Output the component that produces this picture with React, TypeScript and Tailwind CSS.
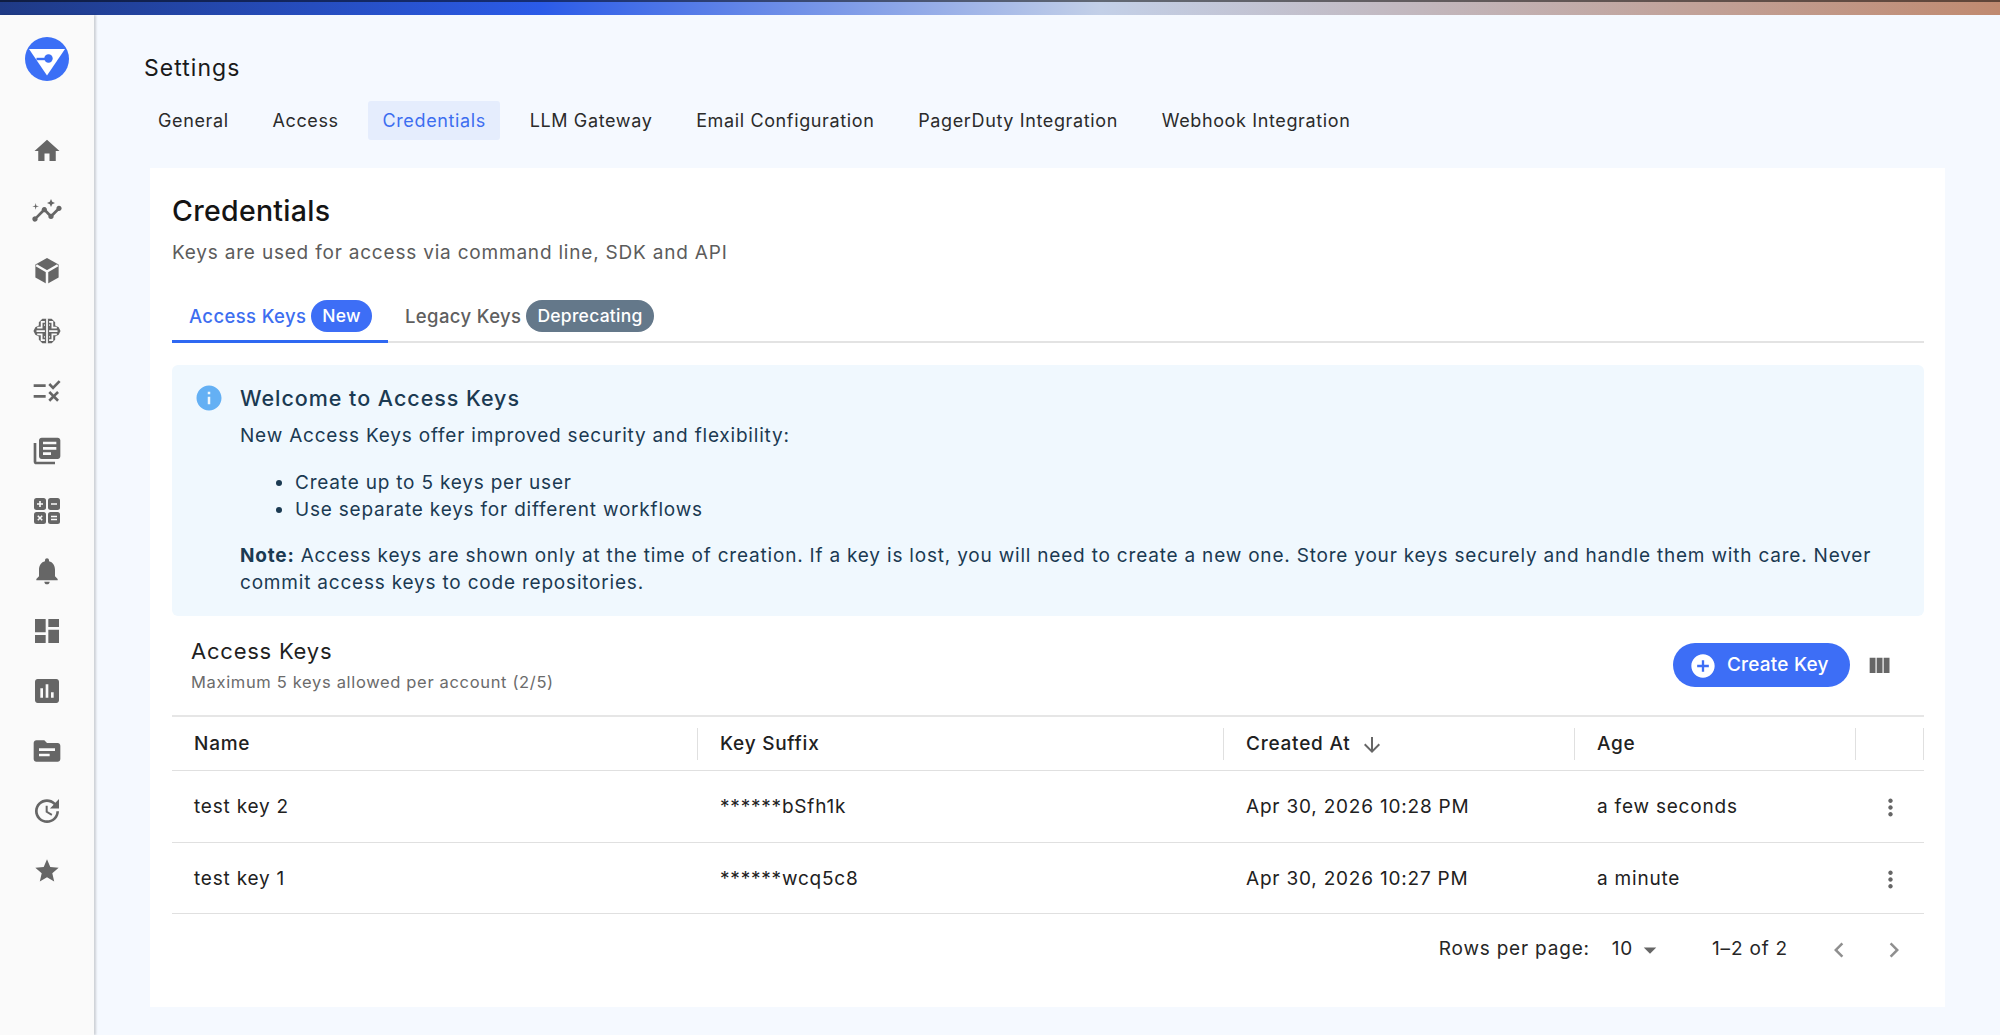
const Icon = ({ d, className = 'w-[32px] h-[32px]' }: { d: string; className?: string }) => (
  <svg viewBox="0 0 24 24" fill="currentColor" className={className}>
    <path d={d} />
  </svg>
)

const icons = {
  home: 'M10 20v-6h4v6h5v-8h3L12 3 2 12h3v8z',
  insights:
    'M21 8c-1.45 0-2.26 1.44-1.93 2.51l-3.55 3.56c-.3-.09-.74-.09-1.04 0l-2.55-2.55C12.27 10.45 11.46 9 10 9c-1.45 0-2.27 1.44-1.93 2.52l-4.56 4.55C2.44 15.74 1 16.55 1 18c0 1.1.9 2 2 2 1.45 0 2.26-1.44 1.93-2.51l4.55-4.56c.3.09.74.09 1.04 0l2.55 2.55C12.73 16.55 13.54 18 15 18c1.45 0 2.27-1.44 1.93-2.52l3.56-3.55c1.07.33 2.51-.48 2.51-1.93 0-1.1-.9-2-2-2zM15 9l.94-2.07L18 6l-2.06-.93L15 3l-.92 2.07L12 6l2.08.93zM3.5 11 4 9l2-.5L4 8l-.5-2L3 8l-2 .5L3 9z',
  rule: 'M16.54 11 13 7.46l1.41-1.41 2.12 2.12 4.24-4.24 1.41 1.41L16.54 11zM11 7H2v2h9V7zm10 6.41L19.59 12 17 14.59 14.41 12 13 13.41 15.59 16 13 18.59 14.41 20 17 17.41 19.59 20 21 18.59 18.41 16 21 13.41zM11 15H2v2h9v-2z',
  books:
    'M4 6H2v14c0 1.1.9 2 2 2h14v-2H4V6zm16-4H8c-1.1 0-2 .9-2 2v12c0 1.1.9 2 2 2h12c1.1 0 2-.9 2-2V4c0-1.1-.9-2-2-2zm-1 9H9V9h10v2zm-4 4H9v-2h6v2zm4-8H9V5h10v2z',
  bell: 'M12 22c1.1 0 2-.9 2-2h-4c0 1.1.89 2 2 2zm6-6v-5c0-3.07-1.64-5.64-4.5-6.32V4c0-.83-.67-1.5-1.5-1.5s-1.5.67-1.5 1.5v.68C7.63 5.36 6 7.92 6 11v5l-2 2v1h16v-1l-2-2z',
  dashboard: 'M3 13h8V3H3v10zm0 8h8v-6H3v6zm10 0h8V11h-8v10zm0-18v6h8V3h-8z',
  assessment:
    'M19 3H5c-1.1 0-2 .9-2 2v14c0 1.1.9 2 2 2h14c1.1 0 2-.9 2-2V5c0-1.1-.9-2-2-2zM9 17H7v-7h2v7zm4 0h-2V7h2v10zm4 0h-2v-4h2v4z',
  topic:
    'M20 6h-8l-2-2H4c-1.1 0-1.99.9-1.99 2L2 18c0 1.1.9 2 2 2h16c1.1 0 2-.9 2-2V8c0-1.1-.9-2-2-2zm-6 10H6v-2h8v2zm4-4H6v-2h12v2z',
  update:
    'M21 10.12h-6.78l2.74-2.82c-2.73-2.7-7.15-2.8-9.88-.1-2.73 2.71-2.73 7.08 0 9.79s7.15 2.71 9.88 0C18.32 15.65 19 14.08 19 12.1h2c0 1.98-.88 4.55-2.64 6.29-3.51 3.48-9.21 3.48-12.72 0-3.5-3.47-3.53-9.11-.02-12.58s9.14-3.47 12.65 0L21 3v7.12zM12.5 8v4.25l3.5 2.08-.72 1.21L11 13V8h1.5z',
  star: 'M12 17.27 18.18 21l-1.64-7.03L22 9.24l-7.19-.61L12 2 9.19 8.63 2 9.24l5.46 4.73L5.82 21z',
  columns: 'M10 18h5V5h-5v13zm-6 0h5V5H4v13zM16 5v13h5V5h-5z',
  more: 'M12 8c1.1 0 2-.9 2-2s-.9-2-2-2-2 .9-2 2 .9 2 2 2zm0 2c-1.1 0-2 .9-2 2s.9 2 2 2 2-.9 2-2-.9-2-2-2zm0 6c-1.1 0-2 .9-2 2s.9 2 2 2 2-.9 2-2-.9-2-2-2z',
  add: 'M12 2C6.48 2 2 6.48 2 12s4.48 10 10 10 10-4.48 10-10S17.52 2 12 2zm5 11h-4v4h-2v-4H7v-2h4V7h2v4h4v2z',
  info: 'M12 2C6.48 2 2 6.48 2 12s4.48 10 10 10 10-4.48 10-10S17.52 2 12 2zm1 15h-2v-6h2v6zm0-8h-2V7h2v2z',
  left: 'M15.41 7.41 14 6l-6 6 6 6 1.41-1.41L10.83 12z',
  right: 'M10 6 8.59 7.41 13.17 12l-4.58 4.59L10 18l6-6z',
  down: 'M20 12l-1.41-1.41L13 16.17V4h-2v12.17l-5.58-5.59L4 12l8 8 8-8z',
  drop: 'M7 10l5 5 5-5z',
}

const Logo = () => (
  <svg viewBox="0 0 44 44" className="w-[44px] h-[44px]">
    <circle cx="22" cy="22" r="22" fill="#3b6ff6" />
    <polygon points="4,12 40,12 22,38.5" fill="#fff" />
    <path d="M11.5 22h11" stroke="#3b6ff6" strokeWidth="2.4" />
    <circle cx="23.5" cy="21.5" r="4.2" fill="#3b6ff6" />
  </svg>
)

const Cube = () => (
  <svg viewBox="0 0 24 24" className="w-[30px] h-[30px]">
    <polygon points="12,1.6 21.3,6.8 21.3,17.2 12,22.4 2.7,17.2 2.7,6.8" fill="currentColor" />
    <path d="M12 12.4v10M12 12.4 3.4 7.4M12 12.4l8.6-5" stroke="#fafafa" strokeWidth="2" fill="none" />
  </svg>
)

// filled outline with the folds cut out in the sidebar colour
const Brain = () => (
  <svg viewBox="0 0 24 24" className="w-[28px] h-[28px]">
    <polygon
      points="8,1.5 16,1.5 19,4.5 19,7.2 22,8.8 23.6,12 22,15.2 19,16.8 19,19.5 16,22.5 8,22.5 5,19.5 5,16.8 2,15.2 0.4,12 2,8.8 5,7.2 5,4.5"
      fill="currentColor"
    />
    <path
      d="M12 1V23M10.2 4.2H7.4V9.2H3.6M10.2 7H9.6M10.2 12H3M10.2 19.8H7.4V14.8H3.6M10.2 17H9.6M13.8 4.2H16.6V9.2H20.4M13.8 7H14.4M13.8 12H21M13.8 19.8H16.6V14.8H20.4M13.8 17H14.4"
      stroke="#fafafa"
      strokeWidth="1.5"
      fill="none"
    />
  </svg>
)

const Calc = () => (
  <svg viewBox="0 0 26 26" className="w-[26px] h-[26px]" fill="currentColor">
    <rect x="0" y="0" width="12" height="12" rx="2.5" />
    <rect x="14" y="0" width="12" height="12" rx="2.5" />
    <rect x="0" y="14" width="12" height="12" rx="2.5" />
    <rect x="14" y="14" width="12" height="12" rx="2.5" />
    <path
      d="M3 6h6M6 3v6M17 6h6M3.8 17.8l4.4 4.4M8.2 17.8l-4.4 4.4M17 18.5h6M17 21.5h6"
      stroke="#fafafa"
      strokeWidth="1.6"
      fill="none"
    />
  </svg>
)

const Badge = ({ label, className }: { label: string; className: string }) => (
  <span className={`h-[32px] flex items-center rounded-full px-[11px] text-white text-[17.5px] font-medium tracking-[0.015em] ${className}`}>
    {label}
  </span>
)

const navIcons = [
  <Icon key="home" d={icons.home} className="w-[30px] h-[30px]" />,
  <Icon key="insights" d={icons.insights} />,
  <Cube key="cube" />,
  <Brain key="brain" />,
  <Icon key="rule" d={icons.rule} />,
  <Icon key="books" d={icons.books} />,
  <Calc key="calc" />,
  <Icon key="bell" d={icons.bell} />,
  <Icon key="dashboard" d={icons.dashboard} />,
  <Icon key="assessment" d={icons.assessment} />,
  <Icon key="topic" d={icons.topic} />,
  <Icon key="update" d={icons.update} />,
  <Icon key="star" d={icons.star} className="w-[28px] h-[28px]" />,
]

const navTabs = ['General', 'Access', 'Credentials', 'LLM Gateway', 'Email Configuration', 'PagerDuty Integration', 'Webhook Integration']

const rows = [
  { name: 'test key 2', suffix: '******bSfh1k', created: 'Apr 30, 2026 10:28 PM', age: 'a few seconds', height: 'h-[72px]' },
  { name: 'test key 1', suffix: '******wcq5c8', created: 'Apr 30, 2026 10:27 PM', age: 'a minute', height: 'h-[71px]' },
]

const gridCols = 'grid grid-cols-[526px_526px_351px_281px_68px]'

export default function App() {
  return (
    <div className="w-[2000px] h-[1035px] overflow-hidden flex flex-col bg-[#f5f9ff] font-['Inter',sans-serif] text-[#212121]">
      <div className="h-[15px] shrink-0 border-t-2 border-black/50 bg-[linear-gradient(90deg,#1f3a85_0%,#2b5be8_27%,#c3d0e8_55%,#c08a70_100%)]" />
      <div className="flex flex-1 min-h-0">
        <aside className="w-[94px] shrink-0 bg-[#fafafa] shadow-[2px_0_2px_rgba(0,0,0,0.16)] flex flex-col items-center pt-[22px] text-[#666666]">
          <Logo />
          <nav className="mt-[40px] flex flex-col items-center">
            {navIcons.map((icon) => (
              <span key={icon.key} className="h-[60px] flex items-center justify-center">
                {icon}
              </span>
            ))}
          </nav>
        </aside>

        <main className="flex-1 min-w-0 pl-[50px] pr-[55px]">
          <h1 className="mt-[38px] text-[23px] leading-[30px] tracking-[0.045em] font-normal text-[#1a1a1a]">Settings</h1>
          <div className="mt-[18px] flex gap-[15.75px] text-[18px] tracking-[0.035em] text-[#2b2b2b]">
            {navTabs.map((tab) => (
              <span
                key={tab}
                className={`h-[39px] px-[14px] flex items-center rounded-[3px] ${tab === 'Credentials' ? 'bg-[#e5edfd] text-[#3d6ef0]' : ''}`}
              >
                {tab}
              </span>
            ))}
          </div>

          <section className="mt-[28px] ml-[6px] h-[839px] bg-white pl-[22px] pr-[21px] pt-[25px]">
            <h2 className="text-[28.5px] leading-[36px] font-medium tracking-[0.01em] text-[#141414]">Credentials</h2>
            <p className="mt-[11px] text-[19px] leading-[26px] tracking-[0.042em] text-[#5c5c5c]">
              Keys are used for access via command line, SDK and API
            </p>

            <div className="mt-[32px] flex h-[45px] border-b-2 border-[#e3e3e3] text-[18.5px] font-medium tracking-[0.02em]">
              <div className="w-[216px] h-[45px] border-b-[3px] border-[#2f68f2] flex items-start pt-[2px] pl-[17px] gap-[5px] text-[#3d6ef0]">
                <span className="leading-[32px]">Access Keys</span>
                <Badge label="New" className="bg-[#3d6ef6]" />
              </div>
              <div className="flex items-start pt-[2px] pl-[17px] gap-[5px] text-[#5f5f5f]">
                <span className="leading-[32px]">Legacy Keys</span>
                <Badge label="Deprecating" className="bg-[#64788a]" />
              </div>
            </div>

            <div className="mt-[22px] h-[251px] rounded-[6px] bg-[#f0f8fe] pl-[23px] pr-[40px] pt-[19px] flex gap-[16px] text-[#1b3a52]">
              <Icon d={icons.info} className="w-[30px] h-[30px] text-[#64b0f4] shrink-0 -ml-[1px] -mt-[1px]" />
              <div className="text-[19px] leading-[27px] tracking-[0.042em]">
                <div className="text-[21.5px] leading-[28px] font-medium tracking-[0.045em]">Welcome to Access Keys</div>
                <p className="mt-[10px]">New Access Keys offer improved security and flexibility:</p>
                <ul className="mt-[20px] pl-[55px] list-disc">
                  <li>Create up to 5 keys per user</li>
                  <li>Use separate keys for different workflows</li>
                </ul>
                <p className="mt-[19px]">
                  <span className="font-bold">Note:</span> Access keys are shown only at the time of creation. If a key is lost, you will need to create a new one. Store your keys securely and handle them with care. Never commit access keys to code repositories.
                </p>
              </div>
            </div>

            <div className="h-[101px] flex items-center justify-between pl-[19px] pr-[31px] border-b-2 border-[#e6e6e6]">
              <div className="-mt-[3px]">
                <div className="text-[22px] leading-[30px] tracking-[0.035em] text-[#1f1f1f]">Access Keys</div>
                <div className="mt-[5px] text-[16.5px] leading-[22px] tracking-[0.04em] text-[#6b6b6b]">
                  Maximum 5 keys allowed per account (2/5)
                </div>
              </div>
              <div className="flex items-center gap-[15px] -mt-[2px]">
                <button className="w-[177px] h-[44px] pt-[2px] rounded-full bg-[#3d6ef6] text-white flex items-center pl-[16px] gap-[10px] text-[19px] font-medium tracking-[0.01em]">
                  <Icon d={icons.add} className="w-[28px] h-[28px]" />
                  Create Key
                </button>
                <Icon d={icons.columns} className="mt-[2px] w-[28px] h-[28px] text-[#666666]" />
              </div>
            </div>

            <div className={`${gridCols} h-[54px] pt-[2px] border-b border-[#e0e0e0] text-[19px] font-medium tracking-[0.04em]`}>
              {['Name', 'Key Suffix', 'Created At', 'Age', ''].map((col, i) => (
                <div key={i} className="flex items-center px-[22px] relative">
                  {col}
                  {col === 'Created At' && <Icon d={icons.down} className="ml-[10px] w-[24px] h-[24px] text-[#666666]" />}
                  <span className="absolute right-0 top-[9px] h-[32px] w-px bg-[#e0e0e0]" />
                </div>
              ))}
            </div>

            {rows.map((row) => (
              <div key={row.name} className={`${gridCols} ${row.height} pt-[2px] border-b border-[#e0e0e0] items-center text-[19px] tracking-[0.042em] text-[#212121]`}>
                <div className="px-[22px]">{row.name}</div>
                <div className="px-[22px]">{row.suffix}</div>
                <div className="px-[22px]">{row.created}</div>
                <div className="px-[22px]">{row.age}</div>
                <div className="flex justify-center">
                  <Icon d={icons.more} className="w-[27px] h-[27px] text-[#666666]" />
                </div>
              </div>
            ))}

            <div className="h-[71px] pr-[15px] flex items-center justify-end text-[19px] tracking-[0.042em] text-[#262626]">
              <span>Rows per page:</span>
              <span className="ml-[22px]">10</span>
              <Icon d={icons.drop} className="ml-[2px] w-[30px] h-[30px] text-[#666666]" />
              <span className="ml-[47px]">1–2 of 2</span>
              <Icon d={icons.left} className="ml-[36px] w-[30px] h-[30px] text-[#8f8f8f]" />
              <Icon d={icons.right} className="ml-[25px] w-[30px] h-[30px] text-[#8f8f8f]" />
            </div>
          </section>
        </main>
      </div>
    </div>
  )
}
